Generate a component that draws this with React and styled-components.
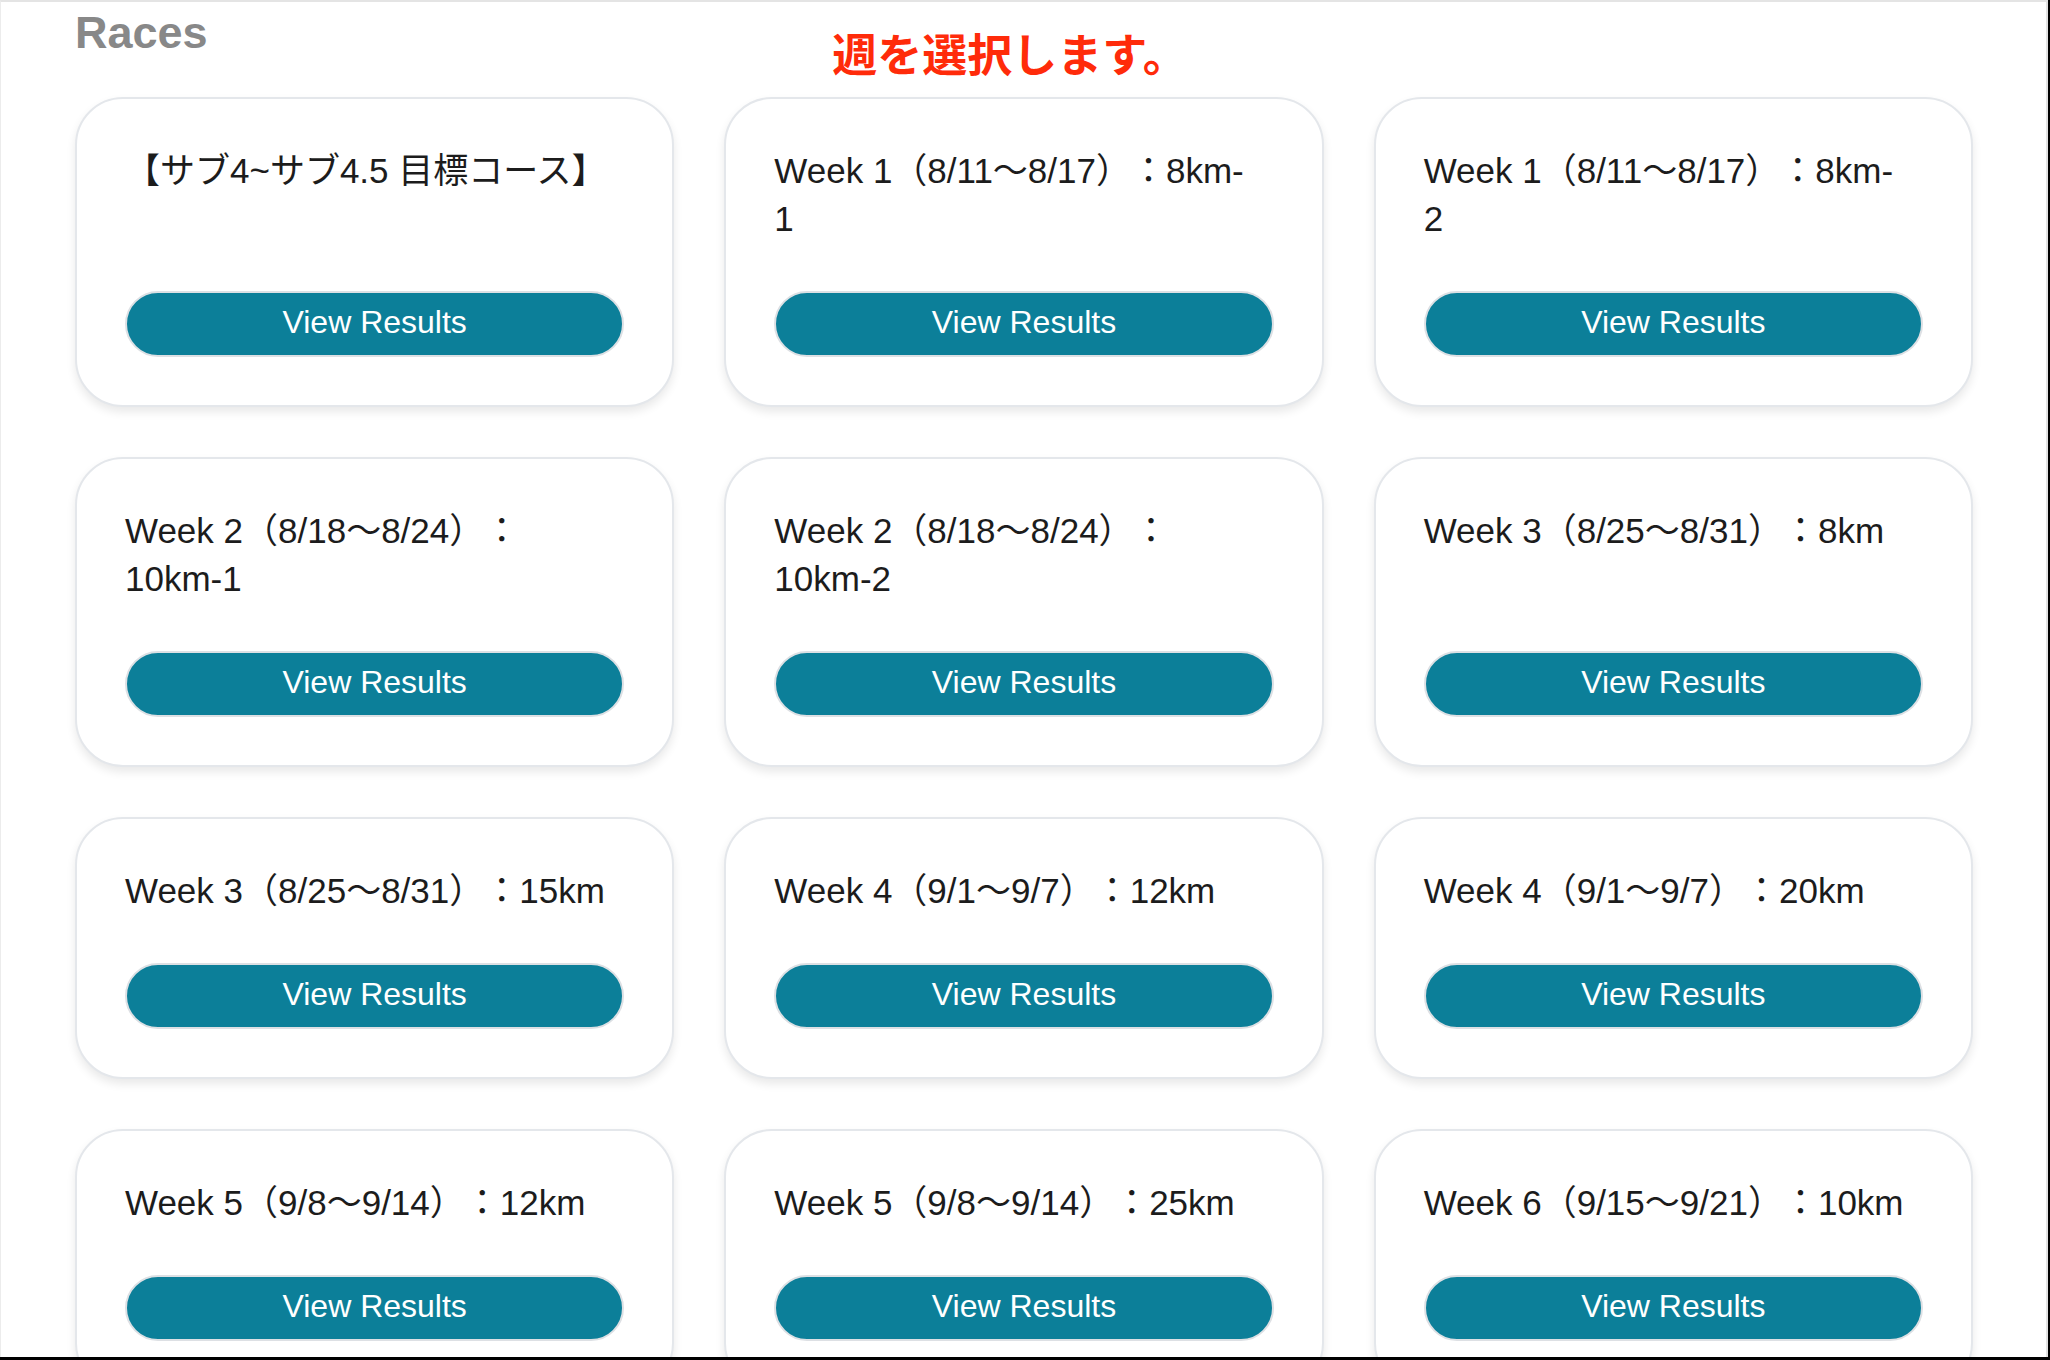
import React from "react";
import styled, { createGlobalStyle } from "styled-components";

const GlobalStyle = createGlobalStyle`
  html, body {
    margin: 0;
    padding: 0;
    background-color: #000;
  }
  body {
    font-family: "Liberation Sans", "Noto Sans CJK JP", Arial, sans-serif;
  }
`

const Frame = styled.div`
  box-sizing: border-box;
  width: 2048px;
  height: 1357px;
  overflow: hidden;
  background-color: #fff;
  border-top: 2px solid #e4e4e4;
  border-left: 1px solid #ececec;
  border-right: 2px solid #e2e2e2;
  padding: 0 73px 0 74px;
`

const Header = styled.div`
  display: grid;
  grid-template-columns: 1fr auto 1fr;
  align-items: start;
  padding: 8px 0 22px;
`

const PageTitle = styled.h1`
  margin: 0;
  font-size: 45px;
  line-height: 45px;
  font-weight: bold;
  color: #888888;
`

const Notice = styled.p`
  margin: 20px 28px 0 0;
  font-family: "Noto Sans CJK JP", sans-serif;
  font-size: 45px;
  line-height: 45px;
  font-weight: bold;
  color: #ff2b0a;
`

const Grid = styled.div`
  display: grid;
  grid-template-columns: repeat(3, 1fr);
  gap: 50px;
`

const Card = styled.div`
  box-sizing: border-box;
  display: flex;
  flex-direction: column;
  gap: 48px;
  padding: 48px;
  background-color: #fff;
  border: 2px solid #e4e7eb;
  border-radius: 48px;
  box-shadow: 0 5px 10px rgba(0, 0, 0, 0.09);
`

const RaceName = styled.div`
  flex: 1;
  font-size: 35px;
  line-height: 48px;
  color: #1c1c1c;
  white-space: pre-line;
  text-spacing-trim: space-all;
`

const ResultsButton = styled.button`
  box-sizing: border-box;
  width: 100%;
  height: 66px;
  padding: 0 0 4px;
  border: 2px solid #dde0e4;
  border-radius: 33px;
  background-color: #0c7f99;
  color: #fff;
  font-family: "Liberation Sans", Arial, sans-serif;
  font-size: 32px;
  cursor: pointer;
`

// line breaks follow the wrapping of the original page
const races = [
  "【サブ4~サブ4.5 目標コース】",
  "Week 1（8/11〜8/17）：8km-\n1",
  "Week 1（8/11〜8/17）：8km-\n2",
  "Week 2（8/18〜8/24）：\n10km-1",
  "Week 2（8/18〜8/24）：\n10km-2",
  "Week 3（8/25〜8/31）：8km",
  "Week 3（8/25〜8/31）：15km",
  "Week 4（9/1〜9/7）：12km",
  "Week 4（9/1〜9/7）：20km",
  "Week 5（9/8〜9/14）：12km",
  "Week 5（9/8〜9/14）：25km",
  "Week 6（9/15〜9/21）：10km",
]

function App() {
  return (
    <>
      <GlobalStyle />
      <Frame>
        <Header>
          <PageTitle>Races</PageTitle>
          <Notice>週を選択します。</Notice>
        </Header>
        <Grid>
          {races.map((name, i) => (
            <Card key={i}>
              <RaceName>{name}</RaceName>
              <ResultsButton>View Results</ResultsButton>
            </Card>
          ))}
        </Grid>
      </Frame>
    </>
  )
}

export default App
